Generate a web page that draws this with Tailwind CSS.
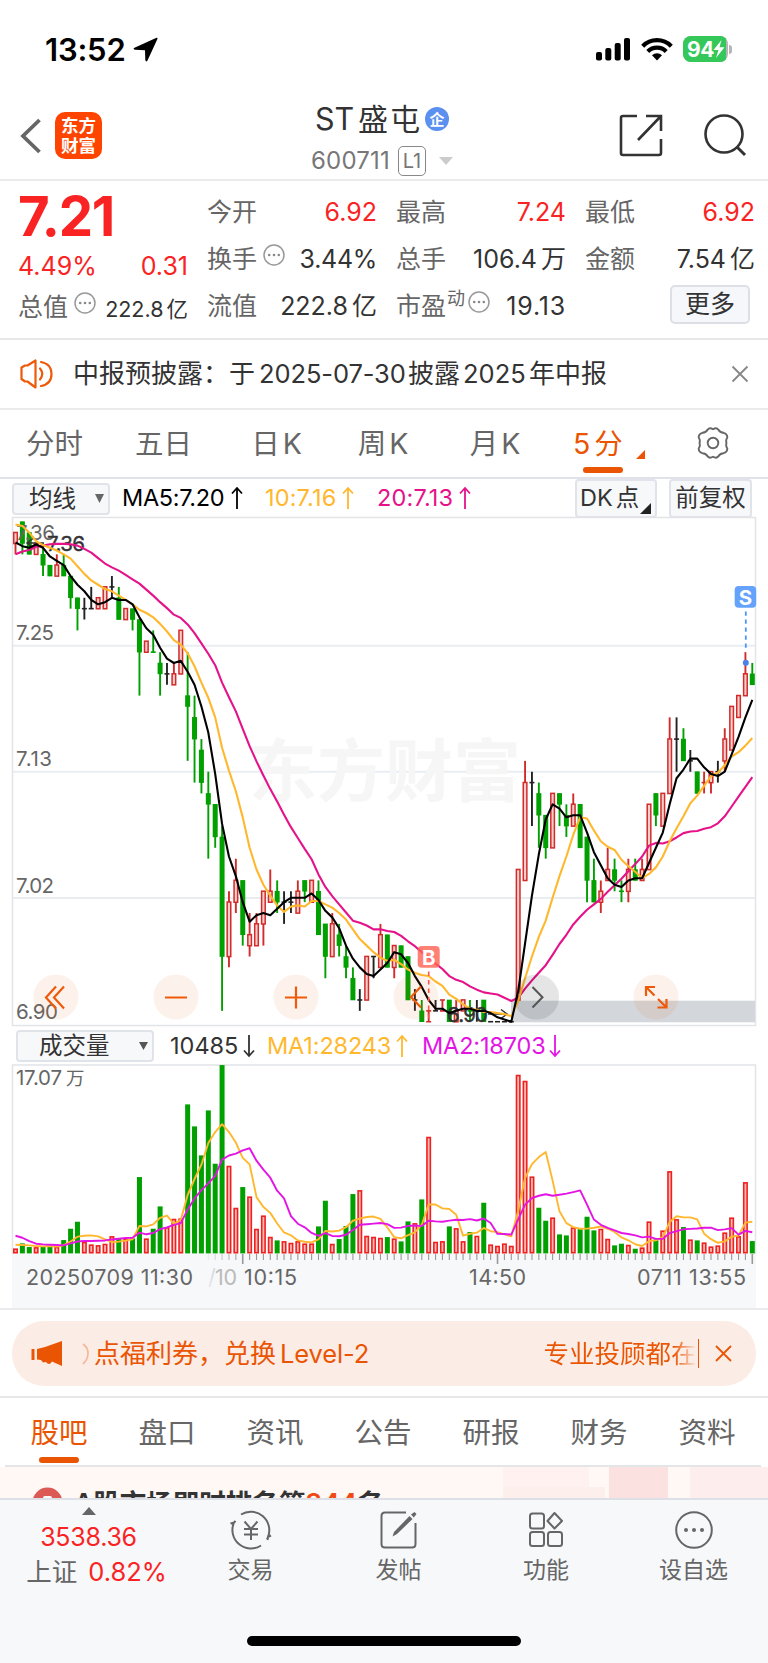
<!DOCTYPE html>
<html lang="zh-CN">
<head>
<meta charset="utf-8">
<title>ST盛屯 600711</title>
<script src="https://cdn.jsdelivr.net/npm/@tailwindcss/browser@4"></script>
</head>
<body class="w-[768px] h-[1663px] overflow-hidden bg-white font-['Inter','Noto_Sans_CJK_SC',sans-serif] text-[#333] leading-none whitespace-nowrap">
<svg width="0" height="0" class="absolute">
  <defs>
    <symbol id="up" viewBox="0 0 12 24"><path d="M6 23V2M1 7.5L6 2l5 5.500" fill="none" stroke="currentColor" stroke-width="1.800"/></symbol>
    <symbol id="down" viewBox="0 0 12 24"><path d="M6 1v21M1 16.500L6 22l5-5.500" fill="none" stroke="currentColor" stroke-width="1.800"/></symbol>
    <symbol id="dots" viewBox="0 0 22 22"><circle cx="11" cy="11" r="10" fill="none" stroke="#999" stroke-width="1.500"/><circle cx="6.200" cy="11" r="1.300" fill="#888"/><circle cx="11" cy="11" r="1.300" fill="#888"/><circle cx="15.800" cy="11" r="1.300" fill="#888"/></symbol>
  </defs>
</svg>
<div class="flex flex-col h-[1663px]">

  <!-- status bar -->
  <div class="h-[98px] shrink-0 flex items-center pl-[45px] pr-[36px] text-black">
    <span class="text-[31px] font-semibold tracking-[-0.2px] w-[88px]">13:52</span>
    <svg width="25" height="25" viewBox="0 0 25 25"><path d="M23.500 0.800Q25 0.500 24.300 2.200L14.500 23.500Q13 25.500 12.300 23L12 13.200L2 12.800Q-0.600 12.200 1.500 10.700Z" fill="#000"/></svg>
    <div class="flex-1"></div>
    <svg width="35" height="24" viewBox="0 0 35 24"><rect x="0" y="15" width="6" height="8.500" rx="2"/><rect x="9.300" y="11" width="6" height="12.500" rx="2"/><rect x="18.700" y="6" width="6" height="17.500" rx="2"/><rect x="28" y="1" width="6" height="22.500" rx="2"/></svg>
    <svg class="ml-[10px]" width="32" height="24" viewBox="0 0 32 24"><g fill="none" stroke="#000" stroke-width="4.200"><path d="M1.700 9.200A20 20 0 0 1 30.300 9.200"/><path d="M6.800 14.500A13 13 0 0 1 25.200 14.500"/></g><path d="M11 18.200A7.400 7.400 0 0 1 21 18.200L16 23.600Z"/></svg>
    <div class="ml-[10px] w-[45px] h-[26px] rounded-[8px] bg-[#b5b5b7] overflow-hidden flex">
      <div class="w-[43px] h-full bg-[#34c759] flex items-center pl-[4px] text-white font-bold text-[21px] tracking-[-0.5px]">94
        <svg class="-ml-[1px] shrink-0" width="12" height="18" viewBox="0 0 12 18"><path d="M8.500 0L0.500 10H5.500L3 18L11.500 7.200H6.500Z" fill="#fff"/></svg>
      </div>
    </div>
    <div class="ml-[1px] w-[3px] h-[9px] rounded-r-full bg-[#b5b5b7]"></div>
  </div>

  <!-- title bar -->
  <div class="h-[83px] shrink-0 border-b-2 border-[#ebebeb] flex pt-[4px]">
    <div class="w-[300px] flex pt-[10px] pl-[20px]">
      <svg class="mt-[6px]" width="22" height="36" viewBox="0 0 22 36"><path d="M19.500 2L3 18L19.500 34" fill="none" stroke="#666" stroke-width="3.800"/></svg>
      <div class="ml-[13px] w-[47px] h-[47px] rounded-[10px] bg-[#ff4400] text-white font-bold text-[17.500px] leading-[20px] text-center pt-[4px]">东方<br>财富</div>
    </div>
    <div class="w-[170px] flex flex-col pl-[11px]">
      <div class="flex items-center h-[34px] pl-[4px]"><span class="text-[30.500px] w-[40px]">ST</span><span class="text-[30px] ml-[3px] tracking-[2px]">盛屯</span>
        <svg class="ml-[3px]" width="24" height="24" viewBox="0 0 24 24"><circle cx="12" cy="12" r="12" fill="#5b8ff0"/><text x="12" y="17.500" font-size="15" font-weight="700" fill="#fff" text-anchor="middle">企</text></svg>
      </div>
      <div class="flex items-center h-[32px] mt-[9px]"><span class="text-[24px] text-[#777] w-[87px] tracking-[0.200px]">600711</span>
        <span class="w-[28px] h-[30px] border-[1.500px] border-[#888] rounded-[5px] flex items-center justify-center text-[20px] text-[#777]">L1</span>
        <svg class="ml-[13px]" width="14" height="8" viewBox="0 0 14 8"><path d="M0 0H14L7 8Z" fill="#ccc"/></svg>
      </div>
    </div>
    <svg class="ml-[149px] mt-[12px]" width="44" height="44" viewBox="0 0 44 44"><path d="M18 2H4Q2 2 2 4V39Q2 41 4 41H40Q42 41 42 39V25M27 2H42V17M42 2L19 26" fill="none" stroke="#333" stroke-width="2.600"/></svg>
    <svg class="ml-[40px] mt-[12px]" width="44" height="44" viewBox="0 0 44 44"><circle cx="21" cy="20" r="18.500" fill="none" stroke="#333" stroke-width="2.600"/><path d="M34 33L42 41" stroke="#333" stroke-width="3"/></svg>
  </div>

  <!-- quote -->
  <div class="h-[159px] shrink-0 border-b-2 border-[#e8e8e8] flex gap-[20px] pl-[18px] pt-[8px] text-[25px]">
    <div class="w-[170px]">
      <div class="h-[54px] flex items-center text-[54.500px] font-bold text-[#fa2323] tracking-[-1.200px]">7.21</div>
      <div class="h-[47px] flex items-center justify-between text-[#fa2323]"><span>4.49%</span><span>0.31</span></div>
      <div class="h-[47px] flex items-center text-[#666] -mt-[6px]"><span>总值</span><svg class="ml-[6px] -mt-[9px]" width="22" height="22"><use href="#dots"/></svg><span class="ml-auto text-[21.500px] text-[#333] mt-[5px]">222.8<span class="ml-[3px]">亿</span></span></div>
    </div>
    <div class="grid grid-cols-[170px_170px_170px] gap-x-[19px] auto-rows-[47px] text-[#666] -ml-[1px]">
      <div class="flex items-center justify-between"><span>今开</span><span class="text-[#fa2323]">6.92</span></div>
      <div class="flex items-center justify-between"><span>最高</span><span class="text-[#fa2323]">7.24</span></div>
      <div class="flex items-center justify-between"><span>最低</span><span class="text-[#fa2323]">6.92</span></div>
      <div class="flex items-center"><span>换手</span><svg class="ml-[6px] -mt-[9px]" width="22" height="22"><use href="#dots"/></svg><span class="ml-auto text-[#333] tracking-[-0.300px]">3.44%</span></div>
      <div class="flex items-center justify-between"><span>总手</span><span class="text-[#333]">106.4<span class="ml-[4px]">万</span></span></div>
      <div class="flex items-center justify-between"><span>金额</span><span class="text-[#333]">7.54<span class="ml-[4px]">亿</span></span></div>
      <div class="flex items-center justify-between"><span>流值</span><span class="text-[#333]">222.8<span class="ml-[4px]">亿</span></span></div>
      <div class="flex items-center"><span>市盈</span><span class="text-[18px] -mt-[16px] ml-[1px]">动</span><svg class="ml-[3px] -mt-[9px]" width="22" height="22"><use href="#dots"/></svg><span class="ml-auto text-[#333] tracking-[0.800px]">19.13</span></div>
      <div class="flex items-center justify-end pr-[5px]"><span class="w-[80px] h-[39px] border-2 border-[#dcdfe6] rounded-[5px] bg-[#f5f7fa] flex items-center justify-center text-[#333] -mt-[4px]">更多</span></div>
    </div>
  </div>

  <!-- notice -->
  <div class="h-[70px] shrink-0 border-b-2 border-[#ebebeb] flex items-center pl-[20px] pr-[19px] text-[26px]">
    <svg width="34" height="30" viewBox="0 0 34 30"><g fill="none" stroke="#ee5a0a" stroke-width="2.200" stroke-linejoin="round" stroke-linecap="round"><path d="M1.500 8.500L5 6.500H7.500L15.500 1.500V28.500L7.500 22.500H5L1.500 20Z"/><path d="M20 9.500Q24.500 15 20 20.500M21 3Q31.500 5 31.500 15T21 27"/></g></svg>
    <span class="ml-[19px]">中报预披露：于</span><span class="ml-[4px] text-[25.500px] w-[149px] tracking-[-0.100px]">2025-07-30</span><span>披露</span><span class="ml-[3px] w-[66px] text-[25.500px]">2025</span><span>年中报</span>
    <svg class="ml-auto" width="18" height="18" viewBox="0 0 18 18"><path d="M1.500 1.500L16.500 16.500M16.500 1.500L1.500 16.500" stroke="#888" stroke-width="1.900"/></svg>
  </div>

  <!-- period tabs -->
  <div class="h-[69px] shrink-0 border-b-2 border-[#dfe2e8] flex text-[28.500px] text-[#666]">
    <div class="w-[109px] flex items-center justify-center pt-[2px]">分时</div>
    <div class="w-[109px] flex items-center justify-center pt-[2px]">五日</div>
    <div class="w-[117px] flex items-center justify-center gap-[3px] pt-[2px]">日<span>K</span></div>
    <div class="w-[96px] flex items-center justify-center gap-[3px] pt-[2px]">周<span>K</span></div>
    <div class="w-[128px] flex items-center justify-center gap-[3px] pt-[2px]">月<span>K</span></div>
    <div class="w-[88px] flex flex-col items-center text-[#ea5504]">
      <div class="h-[57px] pt-[12px] flex items-center gap-[4px] self-start pl-[14px]"><span>5</span>分<svg class="ml-[9px] mt-[20px]" width="9" height="9"><path d="M9 0V9H0Z" fill="#ea5504"/></svg></div>
      <div class="w-[40px] h-[6px] rounded-full bg-[#ea5504]"></div>
    </div>
    <svg class="ml-[49px] mt-[16px]" width="34" height="34" viewBox="-17 -17 34 34"><path d="M-5.500 -13.200Q-3.500 -15.800 0 -13.800Q3.500 -15.800 5.500 -13.200Q7 -10.500 10.500 -10.200Q14.500 -9 14.300 -5.500Q12.500 -3 13.500 0Q12.500 3 14.300 5.500Q14.500 9 10.500 10.200Q7 10.500 5.500 13.200Q3.500 15.800 0 13.800Q-3.500 15.800 -5.500 13.200Q-7 10.500 -10.500 10.200Q-14.500 9 -14.300 5.500Q-12.500 3 -13.500 0Q-12.500 -3 -14.300 -5.500Q-14.500 -9 -10.500 -10.200Q-7 -10.500 -5.500 -13.200Z" fill="none" stroke="#666" stroke-width="1.900"/><circle r="5.300" fill="none" stroke="#666" stroke-width="1.900"/></svg>
  </div>

  <!-- moving average header -->
  <div class="h-[37px] shrink-0 flex items-center pl-[12px] text-[23.500px] pt-[1px]">
    <div class="w-[98px] h-[32px] mt-[1px] border-2 border-[#e0e3e9] rounded-[4px] bg-[#f7f8fa] flex items-center pl-[15px]">均线<svg class="ml-auto mr-[4px]" width="9" height="9"><path d="M0 0H9L4.500 9Z" fill="#666"/></svg></div>
    <div class="ml-[12px] w-[143px] flex items-center text-black tracking-[-0.300px]">MA5:7.20<svg class="ml-[7px]" width="12" height="24"><use href="#up"/></svg></div>
    <div class="w-[112px] flex items-center text-[#ffb82e] tracking-[0.150px]">10:7.16<svg class="ml-[6px]" width="12" height="24"><use href="#up"/></svg></div>
    <div class="w-[198px] flex items-center text-[#e5128a] tracking-[0.150px]">20:7.13<svg class="ml-[6px]" width="12" height="24"><use href="#up"/></svg></div>
    <div class="w-[82px] h-[39px] border-2 border-[#e0e3e9] rounded-[4px] bg-[#f7f8fa] flex items-center pl-[3px]">DK<span class="ml-[3px]">点</span><svg class="ml-[1px] mt-[21px]" width="11" height="11"><path d="M11 0V11H0Z" fill="#222"/></svg></div>
    <div class="ml-[12px] w-[83px] h-[39px] border-2 border-[#e0e3e9] rounded-[4px] bg-[#f7f8fa] flex items-center justify-center">前复权</div>
  </div>

  <!-- candles -->
  <svg class="shrink-0" width="768" height="511" viewBox="0 516 768 511">
    <g id="grid" stroke="#e9edf2" stroke-width="2"><path d="M13 645.700H755M13 771.700H755M13 898H755"/><rect x="12.500" y="517.500" width="743" height="508" fill="none" stroke="#e2e4e8" stroke-width="1.500"/></g>
    <text x="249" y="796" font-size="68" font-weight="700" fill="#f6f6f6" textLength="272">东方财富</text>
    <rect x="511" y="1000.700" width="244" height="21.600" fill="#d3d6db"/>
    <g id="candles"></g>
    <g fill="#666" font-size="20.500"><text x="16" y="539.500" textLength="39">7.36</text><text x="16" y="639.500" textLength="38">7.25</text><text x="16" y="766" textLength="36">7.13</text><text x="16" y="893" textLength="38">7.02</text><text x="16" y="1018.500" textLength="42">6.90</text></g>
    <text x="47" y="550.500" font-size="20.500" fill="#333" stroke="#333" stroke-width=".4" textLength="38">7.36</text><path d="M44 543H27M33 538.500L27 543L33 547.500" fill="none" stroke="#333" stroke-width="1.500"/>
    <text x="447" y="1021.500" font-size="20.500" fill="#333" stroke="#333" stroke-width=".4" textLength="41">6.90</text><path d="M488 1014H507M501 1009.500L507 1014L501 1018.500" fill="none" stroke="#333" stroke-width="1.500"/>
    <g id="ma" fill="none" stroke-width="2.100" stroke-linejoin="round"></g>
    <g fill="#ea5504" fill-opacity=".08"><circle cx="56" cy="997" r="22.600"/><circle cx="176" cy="997" r="22.600"/><circle cx="296" cy="997" r="22.600"/><circle cx="416" cy="997" r="22.600"/><circle cx="656" cy="997" r="22.600"/></g>
    <circle cx="536.500" cy="997" r="22.600" fill="#000" fill-opacity=".1"/>
    <g fill="none" stroke="#ee5a0a" stroke-width="2.200"><path d="M56 986.500L46 997.500L56 1008.500M64 986.500L54 997.500L64 1008.500"/><path d="M165 997.500H187M285 997.500H307M296 986.500V1008.500"/><path d="M421 986.500L411 997L421 1007.500"/><path d="M646 996V987H655M646 987L654.500 995.500M666.500 999V1007.500H657.500M658 999L666.500 1007.500"/></g>
    <path d="M532.500 987L542.500 997.200L532.500 1007.500" fill="none" stroke="#555" stroke-width="2"/>
    <path d="M428.700 971.500V1020" stroke="#ff5546" stroke-width="1.600" stroke-dasharray="4.500 4"/>
    <rect x="417.700" y="946" width="22" height="21.800" rx="4" fill="#ff6455" fill-opacity=".82"/><text x="428.700" y="964.500" font-size="20.500" font-weight="700" fill="#fff" text-anchor="middle">B</text>
    <path d="M745.800 611.500V649" stroke="#4d94fa" stroke-width="1.800" stroke-dasharray="4.200 3.800"/><circle cx="745.800" cy="662.700" r="3" fill="#4a80e8"/>
    <rect x="734.700" y="586" width="21.500" height="21.800" rx="4" fill="#64a2fb"/><text x="745.500" y="604.500" font-size="20.500" font-weight="700" fill="#fff" text-anchor="middle">S</text>
  </svg>

  <!-- volume header -->
  <div class="h-[37px] shrink-0 flex items-center pl-[16px] text-[23.500px] pt-[1px]">
    <div class="w-[138px] h-[32px] border-2 border-[#e0e3e9] rounded-[4px] bg-[#f7f8fa] flex items-center pl-[21px]">成交量<svg class="ml-auto mr-[4px]" width="9" height="8"><path d="M0 0H9L4.500 8Z" fill="#555"/></svg></div>
    <div class="ml-[16px] w-[97px] flex items-center">10485<svg class="ml-[5px]" width="12" height="24"><use href="#down"/></svg></div>
    <div class="w-[155px] flex items-center text-[#ffb82e] tracking-[-0.150px]">MA1:28243<svg class="ml-[5px]" width="12" height="24"><use href="#up"/></svg></div>
    <div class="flex items-center text-[#e415e4] tracking-[-0.150px]">MA2:18703<svg class="ml-[3px]" width="12" height="24"><use href="#down"/></svg></div>
  </div>

  <!-- volume -->
  <svg class="shrink-0 border-b-2 border-[#ebebee]" width="768" height="246" viewBox="0 1064 768 244">
    <defs><linearGradient id="fade" x1="205" x2="240" y1="0" y2="0" gradientUnits="userSpaceOnUse"><stop offset="0" stop-color="#777" stop-opacity="0"/><stop offset="1" stop-color="#777"/></linearGradient></defs>
    <rect x="12" y="1253.500" width="744" height="55" fill="#f7f8fa"/>
    <path d="M12.500 1254V1065H755.500V1254" fill="none" stroke="#e2e4e8" stroke-width="1.500"/>
    <text x="16" y="1085" font-size="20.500" fill="#666" textLength="46">17.07</text><text x="66" y="1085" font-size="18.500" fill="#666">万</text>
    <g id="vol"></g>
    <g fill="#666" font-size="21.500"><text x="26" y="1284.800" textLength="167">20250709 11:30</text><text x="208" y="1284.800" fill="url(#fade)">/</text><text x="215" y="1284.800" fill="#bbb" textLength="22">10</text><text x="244" y="1284.800" textLength="53">10:15</text><text x="469" y="1284.800" textLength="57">14:50</text><text x="637" y="1284.800" textLength="109">0711 13:55</text></g>
  </svg>

  <!-- promo banner -->
  <div class="h-[88px] shrink-0 border-b-2 border-[#e8e8e8] pt-[11px] px-[12px]">
    <div class="h-[65px] rounded-[32px] bg-[#fcece6] flex items-center pl-[19px] pr-[24px] text-[26px] text-[#ea5504]">
      <svg width="32" height="27" viewBox="0 0 32 27"><path d="M0.500 9H3.500V20H0.500ZM6 9L14 7L31 1V26L21 21.500Q19.500 25 16.500 23.500L15 22L12 22.500L10 20L6 19.500Z" fill="#ea5504"/></svg>
      <svg class="ml-[18px]" width="9" height="24"><path d="M2 2Q7.500 6 7 12T2 22" fill="none" stroke="#f5b899" stroke-width="1.700"/></svg>
      <span class="ml-[4px]">点福利券，兑换</span><span class="ml-[4px] text-[25.500px] tracking-[-0.150px]">Level-2</span>
      <span class="ml-auto bg-[linear-gradient(90deg,#ea5504_85%,#fcece6_100%)] bg-clip-text text-transparent text-[25.500px] leading-[34px]">专业投顾都在</span>
      <span class="w-[1.500px] h-[29px] bg-[#ea5504] ml-[1px] mr-[16px]"></span>
      <svg width="17" height="17" viewBox="0 0 17 17"><path d="M1 1L16 16M16 1L1 16" stroke="#ea5504" stroke-width="1.800"/></svg>
    </div>
  </div>

  <!-- content tabs -->
  <div class="h-[69px] shrink-0 w-[756px] ml-[5px] border-b-2 border-[#e3e5e8] grid grid-cols-7 text-[28.500px] text-[#666] justify-items-center">
    <div class="flex flex-col items-center text-[#ea5504]"><div class="h-[59px] flex items-center pt-[11px]">股吧</div><div class="w-[40px] h-[6px] rounded-full bg-[#ea5504]"></div></div>
    <div class="flex items-center pt-[4px]">盘口</div><div class="flex items-center pt-[4px]">资讯</div><div class="flex items-center pt-[4px]">公告</div><div class="flex items-center pt-[4px]">研报</div><div class="flex items-center pt-[4px]">财务</div><div class="flex items-center pt-[4px]">资料</div>
  </div>

  <!-- clipped ranking row -->
  <div class="h-[31px] shrink-0 overflow-hidden bg-[#fff8f5] flex items-start">
    <svg class="ml-[32px] mt-[20px] shrink-0" width="31" height="31"><circle cx="15.500" cy="15.500" r="15" fill="#dc5a56"/><rect x="11" y="9" width="9" height="8" rx="2" fill="#fff"/></svg>
    <div class="ml-[11px] mt-[23px] text-[26.500px] font-semibold text-[#333] w-[330px] shrink-0">A股市场即时排名第<span class="text-[#f04a14]">344</span>名 <span class="text-[#888] font-normal">›</span></div>
    <svg class="shrink-0 ml-[99px]" width="265" height="31"><path d="M0 0H86V20H0Z" fill="#fef1ef"/><path d="M0 20H102V31H0Z" fill="#fdefec"/><path d="M106 0H165V31H106Z" fill="#fbe2e0"/><path d="M187 0H265V31H187Z" fill="#fdeeed"/></svg>
  </div>

  <!-- bottom bar -->
  <div class="flex-1 bg-[#f7f8fa] border-t-2 border-[#dde0e7] flex flex-col items-center">
    <div class="flex w-full h-[136px] text-[#666]">
      <div class="w-[177px] flex flex-col items-center">
        <svg class="mt-[7px]" width="14" height="8"><path d="M0 8H14L7 0Z" fill="#666"/></svg>
        <div class="text-[25px] text-[#fa2323] h-[26px] flex items-center mt-[9px] tracking-[-0.250px]">3538.36</div>
        <div class="text-[25.500px] h-[26px] flex items-center mt-[9px] pl-[16px]">上证<span class="text-[#fa2323] ml-[11px]">0.82%</span></div>
      </div>
      <div class="w-[148px] flex flex-col items-center pt-[10px] pr-[1px] text-[23px]">
        <svg width="44" height="40" viewBox="-22 -20 44 40"><g fill="none" stroke="#666" stroke-width="2"><path d="M-10 -15.500A18.500 18.500 0 0 1 17 7L20 5.500M17 7L16.500 10M10 15.500A18.500 18.500 0 0 1 -17 -7.500L-20.500 -6.500M-17 -7.500L-15.500 -9"/><path d="M-6.500 -8.500L0 -1L6.500 -8.500M0 -1V10M-7 -1H7M-7 4.500H7"/></g></svg>
        <span class="mt-[9px]">交易</span></div>
      <div class="w-[148px] flex flex-col items-center pt-[10px] pr-[1px] text-[23px]">
        <svg width="40" height="40" viewBox="0 0 40 40"><path d="M27 2.500H6Q2.500 2.500 2.500 6V34Q2.500 37.500 6 37.500H33Q36.500 37.500 36.500 34V13" fill="none" stroke="#666" stroke-width="2"/><path d="M15 22L30.500 6L33.500 9L18 24L13.500 26.500ZM32 4.500L35.500 2L37.500 4L34.800 7.500Z" fill="#666"/></svg>
        <span class="mt-[9px]">发帖</span></div>
      <div class="w-[147px] flex flex-col items-center pt-[10px] pr-[1px] text-[23px]">
        <svg width="36" height="40" viewBox="0 0 36 40"><g fill="none" stroke="#666" stroke-width="2"><rect x="2" y="3.500" width="14" height="15" rx="2.500"/><path d="M26.500 3L34 11L26.500 18.500L19.500 11Z" stroke-linejoin="round"/><rect x="2" y="22" width="14" height="14" rx="2.500"/><rect x="20" y="22" width="14" height="14" rx="2.500"/></g></svg>
        <span class="mt-[9px]">功能</span></div>
      <div class="w-[148px] flex flex-col items-center pt-[10px] pr-[1px] text-[23px]">
        <svg width="40" height="40" viewBox="0 0 40 40"><circle cx="20" cy="20" r="17.800" fill="none" stroke="#666" stroke-width="2"/><circle cx="12" cy="20" r="2" fill="#666"/><circle cx="20" cy="20" r="2" fill="#666"/><circle cx="28" cy="20" r="2" fill="#666"/></svg>
        <span class="mt-[9px]">设自选</span></div>
    </div>
    <div class="w-[274px] h-[10px] rounded-full bg-black"></div>
  </div>
</div>

<script>
// colour, high, body top, body bottom, low: steps of 0.01 below 7.36
const C = `r1 1 2 3|g0 0 2 3|g1 1 3 3|r2 2 3 3|g2 3 4 5|g4 4 5 5|r3 4 5 5|g3 4 5 5|g5 5 7 8|g7 7 8 10|k7 8 8 9|k6 8 8 8|r7 7 8 8|r6 6 8 8|k5 6 6 7|g6 7 9 9|r8 8 9 9|g8 8 9 10|g9 9 12 16|r11 11 12 12|g10 12 12 12|g12 13 14 16|k13 14 14 15|r13 14 15 15|r10 10 14 14|g12 16 17 22|g16 18 20 24|g20 21 24 25|g23 25 26 31|g26 26 29 30|g28 29 40 45|r34 35 40 41|r31 33 35 36|g33 33 38 39|r36 38 39 40|r36 37 39 39|r34 34 37 39|r32 34 35 35|g33 34 35 36|k34 35 35 37|k34 35 35 36|r33 34 36 36|g33 33 34 35|r33 33 35 35|g33 34 38 38|g37 37 40 42|r36 37 40 40|g37 38 39 40|g39 40 41 42|g41 42 44 44|k43 44 44 45|r40 40 44 44|k40 40 40 42|r37 38 41 41|g38 38 41 41|r39 39 41 42|g39 39 41 41|g40 40 44 44|k43 44 44 45|g44 45 46 46|r45 45 45 46|k44 45 45 45|r44 44 44 45|g44 44 46 46|r44 45 46 46|r44 44 45 45|g44 45 45 46|k44 45 45 46|g44 44 46 46|k46 46 46 46|k46 46 46 46|k46 46 46 46|k46 46 46 46|r32 32 44 44|r22 24 33 33|k23 24 24 28|g24 25 27 30|g27 27 30 31|r25 25 30 30|g25 25 26 28|g26 27 28 29|r25 26 28 28|g26 26 30 30|g29 29 33 35|g31 33 35 35|r33 34 35 36|r30 32 33 33|g31 32 33 34|g33 34 34 35|r31 32 34 35|g31 32 33 33|r31 32 33 33|r26 26 32 32|g25 25 27 28|r25 25 28 28|r18 20 25 25|k18 20 20 23|g19 20 22 22|k21 22 22 23|g23 23 25 25|r23 24 24 25|r23 23 24 25|k22 23 23 24|r19 20 22 23|r17 17 21 21|r16 16 18 18|r12 14 16 16|g13 14 15 15`
  .split('|').map(s => [s[0], ...s.slice(1).split(' ').map(Number)]);
// volume bar heights, a third of a pixel each, with colours
const V = [15,30,19,19,22,22,20,40,74,95,35,27,25,29,52,43,43,45,229,45,74,141,79,104,105,447,381,294,429,269,565,263,137,199,171,74,114,50,39,37,32,37,30,30,81,158,29,43,82,178,190,53,50,47,49,45,36,96,91,162,350,35,37,81,76,37,64,53,152,27,23,30,23,536,518,231,137,98,108,57,54,78,73,110,69,74,44,24,29,26,14,18,96,42,69,247,103,79,42,39,33,21,24,63,108,52,214,37];
const VG = 'rggrggrgggrrrrrgrggrggrrrggggggrrgrrrrgrrrrrggrgggrrrrgrggrgrrrgrrgrgrrrrrrrggrggrgggrrggrgrrgrrrgrgrrrrrrrg';
const X = i => 15.5 + 6.886 * i, Y = k => 521.7 + 10.87 * k, VY = h => 1253.4 - h / 3;
const col = { r: '#d22b2b', g: '#00a000', k: '#222' };
let s = '';
C.forEach(([t, h, a, b, l], i) => {
  const x = X(i), c = col[t];
  if (t === 'r' && b > a) {
    s += `<path d="M${x} ${Y(h)}V${Y(a)}M${x} ${Y(b)}V${Y(l)}" stroke="${c}" stroke-width="1.9"/><rect x="${x-1.8}" y="${Y(a)-.1}" width="3.600" height="${Y(b)-Y(a)+.2}" fill="#f9cfcc" stroke="${c}" stroke-width="1.5"/>`;
  } else {
    s += `<path d="M${x} ${Y(h)}V${Y(l)}" stroke="${c}" stroke-width="1.9"/>`;
    s += b > a ? `<rect x="${x-2.5}" y="${Y(a)-.3}" width="5" height="${Y(b)-Y(a)+.6}" fill="${c}"/>` : `<path d="M${x-2.5} ${Y(a)}h5" stroke="${c}" stroke-width="1.6"/>`;
  }
});
s += `<path d="M${X(60)-2.5} ${Y(46)}h5M${X(62)-2.5} ${Y(45)}h5" stroke="#d22b2b" stroke-width="1.6"/>`;
document.getElementById('candles').innerHTML = s;
const avg = (d, n, lead) => d.map((_, i) => i < lead.length ? lead[i] : d.slice(i - n + 1, i + 1).reduce((p, q) => p + q) / n);
const line = (d, f, c) => `<polyline fill="none" stroke="${c}" points="${d.map((v, i) => X(i) + ',' + f(v)).join(' ')}"/>`;
const close = C.map(([t, h, a, b]) => t === 'g' ? b : a);
document.getElementById('ma').innerHTML =
  line(avg(close, 20, [3,2.75,2.6,2.3,2.2,2.07,2.04,2.04,2.07,2.2,2.5,2.85,3.35,3.85,4.2,4.5,4.9,5.3,5.7]), Y, '#e5128a') +
  line(avg(close, 10, [.26,.4,1,1.8,2.15,2.4,2.65,3,3.4]), Y, '#ffb82e') +
  line(avg(close, 5, [1.9,2.25,2.4,2.1]), Y, '#000');
s = '';
V.forEach((h, i) => {
  const x = X(i), g = VG[i] === 'g';
  s += g ? `<rect x="${x-2.5}" y="${VY(h)}" width="5" height="${h/3}" fill="#00a000"/>` : `<rect x="${x-1.7}" y="${VY(h)+.8}" width="3.400" height="${h/3-1.5}" fill="#ffb9b2" stroke="#ee2020" stroke-width="1.6"/>`;
  if (i >= 28) s += `<path d="M${x} 1254V${[33,70,107].includes(i) ? 1264 : 1260}" stroke="#999" stroke-width="${[33,70,107].includes(i) ? 1.6 : 1.1}" opacity="${Math.min(1, (i-27)/6)}"/>`;
});
s += '<g stroke-width="1.9" stroke-linejoin="round">' + line(avg(V, 5, [26,25,24,22]), VY, '#ffb82e') + line(avg(V, 10, [53,47,37,29,27,26,25,24,30]), VY, '#e415e4') + '</g>';
document.getElementById('vol').innerHTML = s;
</script>
</body>
</html>
